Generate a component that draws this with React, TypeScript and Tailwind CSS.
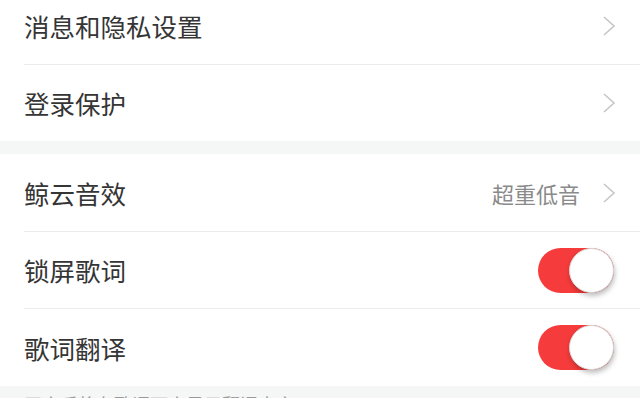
import React from 'react';

const Chevron = () => (
  <svg width="14" height="22" viewBox="0 0 14 22" className="ml-[22px]">
    <polyline points="2,2 12,11 2,20" fill="none" stroke="#c6c6c6" strokeWidth="1.6" />
  </svg>
);

const Toggle = () => (
  <div className="relative w-[76px] h-[45px] rounded-full bg-[#f53b3b]">
    <div className="absolute right-0 top-0 w-[45px] h-[45px] rounded-full bg-white border border-[#d8d8d8] shadow-[1px_3px_5px_rgba(0,0,0,0.25)]" />
  </div>
);

interface RowProps {
  label: string;
  value?: string;
  toggle?: boolean;
  divider?: boolean;
  tall?: boolean;
}

const Row: React.FC<RowProps> = ({ label, value, toggle, divider, tall }) => (
  <div>
    <div className={`${tall ? 'h-[77px]' : 'h-[76px]'} flex items-center pl-6 pr-6`}>
      <span className="flex-1 text-[25.5px] text-[#353535] leading-none">{label}</span>
      {value && <span className="text-[22px] text-[#8a8a8a] leading-none">{value}</span>}
      {toggle ? (
        <div className="mr-[2px]">
          <Toggle />
        </div>
      ) : (
        <Chevron />
      )}
    </div>
    {divider && <div className="ml-6 h-px bg-[#ececec]" />}
  </div>
);

export default function App() {
  return (
    <div
      className="w-[640px] h-[398px] overflow-hidden bg-white"
      style={{ fontFamily: '"Noto Sans CJK SC", "Noto Sans", sans-serif' }}
    >
      <div className="-mt-[12px]">
        <Row label="消息和隐私设置" divider />
        <Row label="登录保护" />
        <div className="h-[13px] bg-[#f5f6f6]" />
        <Row label="鲸云音效" value="超重低音" divider tall />
        <Row label="锁屏歌词" toggle divider />
        <Row label="歌词翻译" toggle tall />
        <div className="bg-[#f5f6f6] px-6 pt-[7px] pb-4">
          <p className="text-[18px] text-[#999999] leading-tight">开启后将在歌词下方显示翻译内容</p>
        </div>
      </div>
    </div>
  );
}
